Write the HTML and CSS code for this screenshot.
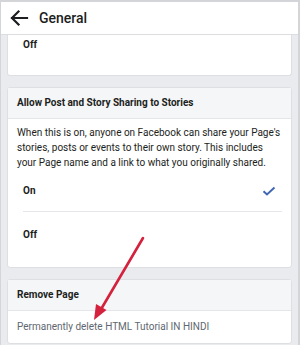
FILE: index.html
```html
<!DOCTYPE html>
<html>
<head>
<meta charset="utf-8">
<link rel="stylesheet" href="styles.css">
</head>
<body>
<div class="frame">
  <header class="topbar">
    <svg class="back" width="20" height="18" viewBox="0 0 20 18"><path d="M18 9H3M9.5 2.5L3 9l6.5 6.5" fill="none" stroke="#1c1e21" stroke-width="2.2" stroke-linecap="square"/></svg>
    <span class="title">General</span>
  </header>
  <main class="content">
    <section class="card card-cut">
      <div class="option">Off</div>
    </section>
    <section class="card">
      <div class="card-head">Allow Post and Story Sharing to Stories</div>
      <p class="desc">When this is on, anyone on Facebook can share your Page's stories, posts or events to their own story. This includes your Page name and a link to what you originally shared.</p>
      <div class="options">
        <div class="option sep"><span>On</span>
          <svg class="check" width="14" height="10" viewBox="0 0 14 10"><path d="M1.5 5.2L5 8.5 12.5 1.5" fill="none" stroke="#4267b2" stroke-width="2"/></svg>
        </div>
        <div class="option"><span>Off</span></div>
      </div>
    </section>
    <section class="card">
      <div class="card-head">Remove Page</div>
      <div class="link">Permanently delete HTML Tutorial IN HINDI</div>
    </section>
  </main>
  <svg class="arrow" width="60" height="90" viewBox="0 0 60 90"><path d="M54 4 L11 77" stroke="#d4213d" stroke-width="2.6" fill="none" stroke-linecap="round"/><path d="M5 86 L7 70 L17.5 76 Z" fill="#d4213d"/></svg>
</div>
</body>
</html>
```
FILE: styles.css
```css
html, body {
  margin: 0;
  padding: 0;
}
body {
  width: 300px;
  height: 345px;
  overflow: hidden;
  background: #d4d5d8;
  font-family: Roboto, "Liberation Sans", sans-serif;
  color: #1c1e21;
}
.frame {
  position: relative;
  margin: 2px 2px 0 0;
  height: 343px;
  background: #e9ebee;
  border-left: 1px solid #d4d5d8;
}
.topbar {
  height: 32px;
  background: #fff;
  border-bottom: 1px solid #dcdde0;
  display: flex;
  align-items: center;
  padding-left: 8px;
}
.back {
  display: block;
  margin-top: -1px;
}
.title {
  margin-left: 10px;
  font-size: 14px;
  font-weight: 500;
  color: #1c1e21;
  margin-top: -1px;
}
.content {
  padding: 0 6px 0 6px;
  display: flex;
  flex-direction: column;
  gap: 11px;
}
.card {
  background: #fff;
  border: 1px solid #dddfe2;
  border-radius: 3px;
}
.card-cut {
  border-top: none;
  border-radius: 0 0 3px 3px;
  height: 40px;
}
.card-cut .option {
  height: 18px;
}
.card-head {
  background: #f5f6f7;
  border-bottom: 1px solid #e4e6e9;
  font-size: 10px;
  font-weight: 700;
  padding: 0 9px;
  height: 30px;
  line-height: 30px;
}
.desc {
  margin: 0;
  padding: 6px 9px 0 9px;
  font-size: 10px;
  line-height: 15px;
}
.options {
  padding: 0 9px 10px 15px;
}
.option {
  display: flex;
  align-items: center;
  justify-content: space-between;
  height: 45px;
  font-size: 10px;
  font-weight: 700;
  padding-left: 15px;
}
.options .option {
  padding-left: 0;
}
.options .option:first-child {
  height: 41px;
}
.option.sep {
  border-bottom: 1px solid #e4e6e9;
}
.check {
  margin-right: 6px;
}
.link {
  font-size: 10px;
  color: #606770;
  padding: 0 9px;
  height: 32px;
  line-height: 32px;
}
.arrow {
  position: absolute;
  left: 88px;
  top: 232px;
}
```
